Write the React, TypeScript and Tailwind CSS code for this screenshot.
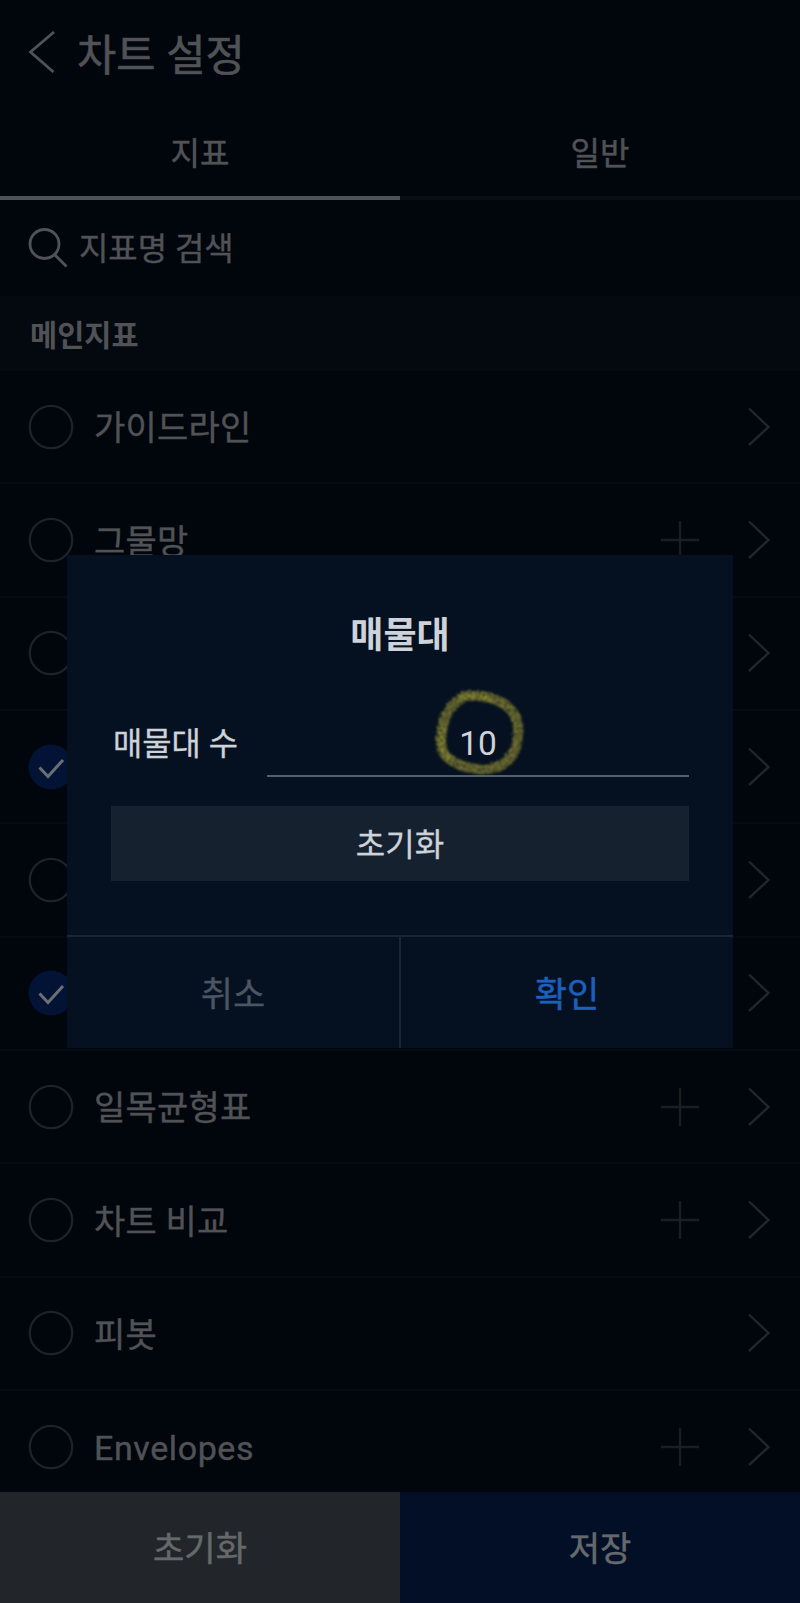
import { useState } from "react";

type Indicator = {
  name: string;
  checked?: boolean;
  addable?: boolean;
};

const indicators: Indicator[] = [
  { name: "가이드라인" },
  { name: "그물망", addable: true },
  { name: "" },
  { name: "", checked: true },
  { name: "" },
  { name: "", checked: true },
  { name: "일목균형표", addable: true },
  { name: "차트 비교", addable: true },
  { name: "피봇" },
  { name: "Envelopes", addable: true },
];

function CheckCircle({ checked }: { checked?: boolean }) {
  return (
    <svg width="46" height="46" viewBox="0 0 46 46" fill="none" className="shrink-0">
      {checked ? (
        <>
          <circle cx="23" cy="23" r="22.5" fill="#021336" />
          <path d="M11.5 23.5 20 32.5 35 16" stroke="#6b6e73" strokeWidth="3" />
        </>
      ) : (
        <circle cx="23" cy="23" r="21.2" stroke="#1f2227" strokeWidth="2.3" />
      )}
    </svg>
  );
}

function PlusIcon() {
  return (
    <svg width="38" height="38" viewBox="0 0 38 38" stroke="#1b1e21" strokeWidth="2.4">
      <path d="M19 0V38M0 19H38" />
    </svg>
  );
}

function ChevronRight() {
  return (
    <svg width="24" height="40" viewBox="0 0 24 40" fill="none" stroke="#222529" strokeWidth="2.4">
      <path d="M2 1.500 21.5 20 2 38" />
    </svg>
  );
}

// Chalk ring drawn around the value
function ChalkRing() {
  return (
    <svg
      className="absolute left-[162px] top-[-33px] pointer-events-none"
      width="100"
      height="100"
      viewBox="0 0 100 100"
      fill="none"
      aria-hidden="true"
    >
      <filter id="chalk" x="-10%" y="-10%" width="120%" height="120%">
        <feTurbulence type="fractalNoise" baseFrequency="0.5" numOctaves="2" seed="4" result="noise" />
        <feDisplacementMap in="SourceGraphic" in2="noise" scale="6" result="rough" />
        <feColorMatrix in="noise" type="matrix" values="0 0 0 0 0  0 0 0 0 0  0 0 0 0 0  0 0 0 2.2 -0.4" result="grain" />
        <feComposite in="rough" in2="grain" operator="in" result="chalked" />
        <feGaussianBlur in="chalked" stdDeviation="0.8" />
      </filter>
      <g filter="url(#chalk)" strokeLinecap="round" strokeLinejoin="round">
        <path
          d="M34 16C26 21 16 30 14 44C11 58 11 70 19 76C29 84 44 89 60 87C76 85 86 75 89 56C91 40 87 30 75 22C64 15 48 13 35 14"
          stroke="#7f7c31"
          strokeWidth="10"
        />
        <path d="M34 15C42 14 52 14 62 17M14 48C11 60 12 69 19 76" stroke="#9a9733" strokeWidth="6" />
      </g>
    </svg>
  );
}

function SettingModal() {
  const [value, setValue] = useState("10");

  return (
    <div className="absolute left-[67px] top-[555px] w-[666px] h-[493px] flex flex-col bg-[#051120]" role="dialog" aria-modal="true">
      <h2 className="mt-[54px] h-[54px] leading-[54px] text-center text-[36px] font-bold text-[#ced2d9]">매물대</h2>

      <div className="relative mt-[52px] mx-11 h-[62px] flex">
        <span className="w-[156px] pl-0.5 h-[58px] leading-[58px] text-[31.800px] text-[#ced2d9] shrink-0 [-webkit-text-stroke:0.3px]">매물대 수</span>
        <div className="relative flex-1 border-b-2 border-[#555e6a]">
          <input
            value={value}
            onChange={(e) => setValue(e.target.value)}
            className="w-full h-[56px] bg-transparent text-center text-[33.500px] text-[#ced2d9] outline-none"
          />
          <ChalkRing />
        </div>
      </div>

      <button
        onClick={() => setValue("10")}
        className="mt-[29px] mx-11 h-[75px] pt-[3px] bg-[#162130] text-[32px] text-[#ced2d9] [-webkit-text-stroke:0.3px]"
      >
        초기화
      </button>

      <div className="mt-auto h-[113px] flex border-t-2 border-[#1b2634] text-[35px] [-webkit-text-stroke:0.3px]">
        <button className="flex-1 pt-[7px] border-r-2 border-[#1b2634] text-[#4c5563]">취소</button>
        <button className="flex-1 pt-[7px] text-[#1c5fbe] [-webkit-text-stroke:0.6px]">확인</button>
      </div>
    </div>
  );
}

export default function App() {
  return (
    <div className="relative w-[800px] h-[1603px] overflow-hidden flex flex-col bg-[#01050c] text-[#505256] font-['Roboto','Noto_Sans_CJK_KR',sans-serif]">
      <header className="h-[108px] pl-7 flex items-center shrink-0">
        <svg width="28" height="42" viewBox="0 0 28 42" fill="none" stroke="#505256" strokeWidth="2.8" className="mb-1">
          <path d="M26 1 2.5 21 25.500 41" />
        </svg>
        <h1 className="pl-[21px] pt-[3px] text-[42.700px] leading-[60px] [-webkit-text-stroke:0.6px]">차트 설정</h1>
      </header>

      <nav className="h-[92px] flex shrink-0 text-[32px] text-center [-webkit-text-stroke:0.5px]">
        <button className="flex-1 pt-1 border-b-4 border-[#4f5155]">지표</button>
        <button className="flex-1 pt-1 border-b-4 border-[#0b0f14]">일반</button>
      </nav>

      <div className="h-[96px] pl-7 flex items-center shrink-0">
        <svg width="40" height="40" viewBox="0 0 40 40" fill="none" stroke="#505256" strokeWidth="2.8">
          <circle cx="16.500" cy="16" r="14.500" />
          <path d="M26.500 26.500 38.500 38.500" />
        </svg>
        <span className="pl-[11px] pt-[3px] text-[31.900px] [-webkit-text-stroke:0.4px]">지표명 검색</span>
      </div>

      <h2 className="h-[75px] leading-[80px] pl-[30px] shrink-0 bg-[#040910] text-[29.500px] font-bold">메인지표</h2>

      <ul className="flex-1 min-h-0 overflow-hidden">
        {indicators.map((item, i) => (
          <li key={i} className="h-[113.350px] pl-7 pr-[29px] flex items-center border-b-2 border-[#060b12]">
            <CheckCircle checked={item.checked} />
            <span className="pl-5 pt-1 flex-1 text-[34px] tracking-[0.2px] [-webkit-text-stroke:0.4px]">
              <span className={item.name === "Envelopes" ? "tracking-[0.6px]" : ""}>{item.name}</span>
            </span>
            {item.addable && <PlusIcon />}
            <span className="pl-[48px]">
              <ChevronRight />
            </span>
          </li>
        ))}
      </ul>

      <footer className="h-[111px] flex shrink-0 text-[34px] [-webkit-text-stroke:0.5px]">
        <button className="flex-1 pt-1 bg-[#222529] text-[#66696c]">초기화</button>
        <button className="flex-1 pt-1 bg-[#020f26] text-[#66696c]">저장</button>
      </footer>

      <SettingModal />
    </div>
  );
}
